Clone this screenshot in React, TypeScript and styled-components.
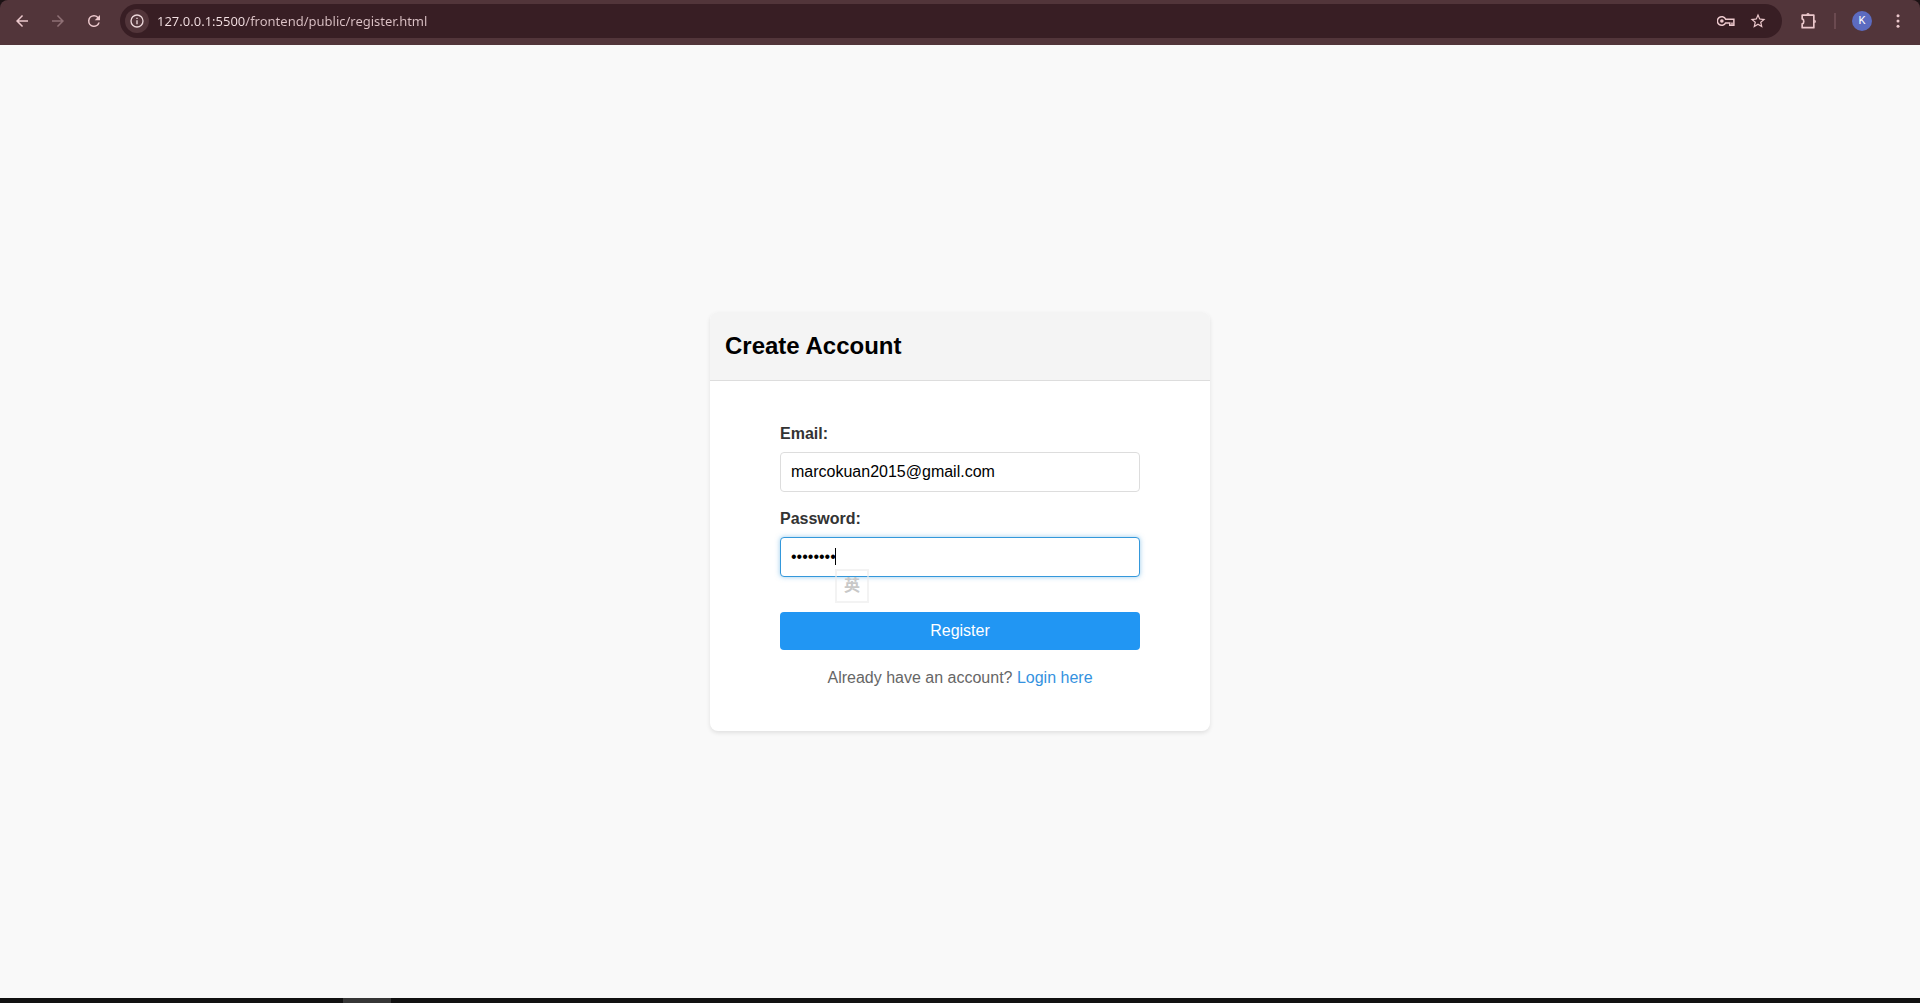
import React, { useState } from "react";
import styled, { createGlobalStyle, css } from "styled-components";

const GlobalStyle = createGlobalStyle`
  *, *::before, *::after { box-sizing: border-box; }
  body {
    margin: 0;
    background: #f9f9f9;
    font-family: "Liberation Sans", Arial, sans-serif;
    font-size: 16px;
  }
`;

const Screen = styled.div`
  min-height: 100vh;
  display: flex;
  flex-direction: column;
`;

const TopEdge = styled.div`
  background: #1c1214;
`;

const Toolbar = styled.header`
  display: flex;
  align-items: center;
  height: 45px;
  padding: 0 4px 4px 4px;
  background: #52353a;
  border-radius: 8px 8px 0 0;
`;

const ToolButton = styled.button<{ $dim?: boolean }>`
  display: flex;
  align-items: center;
  justify-content: center;
  flex: none;
  width: 36px;
  height: 32px;
  padding: 0;
  border: 0;
  border-radius: 16px;
  background: transparent;
  color: ${(p) => (p.$dim ? "#8f7075" : "#ecc8cc")};
`;

const NavButtons = styled.div`
  display: flex;
  width: 116px;
`;

const AddressBar = styled.div`
  display: flex;
  align-items: center;
  flex: 1;
  height: 34px;
  padding: 0 8px 0 5px;
  border-radius: 17px;
  background: #381e24;
`;

const SiteInfo = styled.button`
  display: flex;
  align-items: center;
  justify-content: center;
  flex: none;
  width: 24px;
  height: 24px;
  padding: 0;
  border: 0;
  border-radius: 50%;
  background: #52353a;
  color: #ecd8da;
`;

const AddressInput = styled.input`
  flex: 1;
  min-width: 0;
  height: 24px;
  margin-left: 8px;
  padding: 0;
  border: 0;
  outline: 0;
  color: transparent;
  background: linear-gradient(90deg, #f5e2e4 89px, #dcc2c6 89px);
  background-clip: text;
  -webkit-background-clip: text;
  font: 13px/20px "Noto Sans", "Open Sans", sans-serif;
`;

const AddressActions = styled.div`
  display: flex;
  button { width: 32px; }
`;

const Extras = styled.div`
  display: flex;
  align-items: center;
  padding-left: 8px;
`;

const Separator = styled.span`
  width: 2px;
  height: 16px;
  margin: 0 8px;
  background: #6b4a50;
`;

const Avatar = styled.span`
  display: flex;
  align-items: center;
  justify-content: center;
  width: 20px;
  height: 20px;
  border-radius: 50%;
  background: #5c6bc0;
  color: #fff;
  font: 11px/20px Roboto, sans-serif;
`;

const Page = styled.main`
  flex: 1;
  display: flex;
  align-items: center;
  justify-content: center;
`;

const Card = styled.section`
  width: 100%;
  max-width: 500px;
  border-radius: 8px;
  overflow: hidden;
  background: #fff;
  box-shadow: 0 2px 4px rgba(0, 0, 0, 0.1);
`;

const CardHeader = styled.div`
  padding: 16px 15px;
  border-bottom: 1px solid #ddd;
  background: #f4f4f4;
`;

const Title = styled.h1`
  margin: 0;
  color: #000;
  font-size: 24px;
  line-height: 36px;
`;

const Form = styled.form`
  padding: 42px 70px;
`;

const Field = styled.div`
  display: flex;
  flex-direction: column;
  gap: 8px;
  margin-bottom: 16px;
`;

const Label = styled.label`
  color: #333;
  font-weight: bold;
  line-height: 21px;
`;

const InputWrap = styled.div`
  position: relative;
`;

const TextInput = styled.input<{ $active?: boolean }>`
  display: block;
  width: 100%;
  height: 40px;
  padding: 0 10px;
  border: 1px solid #ddd;
  border-radius: 4px;
  outline: 0;
  background: #fff;
  color: #000;
  font: 16px "Liberation Sans", Arial, sans-serif;
  ${(p) =>
    p.$active &&
    css`
      border-color: #3498db;
      box-shadow: 0 0 5px rgba(52, 152, 219, 0.5);
      caret-color: transparent;
    `}
`;

const Caret = styled.span`
  position: absolute;
  left: 55px;
  top: 11px;
  width: 1px;
  height: 17px;
  background: #000;
`;

const ImeBadge = styled.span`
  position: absolute;
  left: 55px;
  top: 32px;
  width: 34px;
  height: 34px;
  border: 2px solid rgba(235, 235, 235, 0.6);
  color: #c8c8c8;
  font: bold 16px/27px "Noto Sans CJK TC", sans-serif;
  text-align: center;
`;

const RegisterButton = styled.button`
  width: 100%;
  height: 38px;
  margin: 19px 0 16px;
  padding: 0;
  border: 0;
  border-radius: 4px;
  background: #2196f3;
  color: #fff;
  font: 16px "Liberation Sans", Arial, sans-serif;
`;

const Hint = styled.p`
  margin: 0;
  color: #666;
  line-height: 23px;
  text-align: center;
`;

const Link = styled.a`
  color: #3492e0;
  text-decoration: none;
`;

const Taskbar = styled.footer`
  display: flex;
  height: 5px;
  padding-left: 343px;
  background: #111;
`;

const TaskbarItem = styled.span`
  width: 48px;
  background: #363636;
`;

type IconProps = { children: React.ReactNode; size?: number };

const Icon = ({ children, size = 18 }: IconProps) => (
  <svg width={size} height={size} viewBox="0 0 24 24" fill="currentColor" aria-hidden="true">
    {children}
  </svg>
);

export default function App() {
  const [url, setUrl] = useState("127.0.0.1:5500/frontend/public/register.html");
  const [email, setEmail] = useState("marcokuan2015@gmail.com");
  const [password, setPassword] = useState("password");

  return (
    <>
      <GlobalStyle />
      <Screen>
        <TopEdge>
          <Toolbar>
            <NavButtons>
              <ToolButton aria-label="Back">
                <Icon><path d="M20 11H7.83l5.59-5.59L12 4l-8 8 8 8 1.41-1.41L7.83 13H20z" /></Icon>
              </ToolButton>
              <ToolButton aria-label="Forward" $dim>
                <Icon><path d="M12 4l-1.41 1.41L16.17 11H4v2h12.17l-5.58 5.59L12 20l8-8z" /></Icon>
              </ToolButton>
              <ToolButton aria-label="Reload">
                <Icon><path d="M17.65 6.35A7.96 7.96 0 0 0 12 4a8 8 0 1 0 7.73 10h-2.08A6 6 0 1 1 12 6c1.66 0 3.14.69 4.22 1.78L13 11h7V4z" /></Icon>
              </ToolButton>
            </NavButtons>
            <AddressBar>
              <SiteInfo aria-label="Site information">
                <Icon size={16}><path d="M11 7h2v2h-2zm0 4h2v6h-2zm1-9a10 10 0 1 0 0 20 10 10 0 0 0 0-20zm0 18a8 8 0 1 1 0-16 8 8 0 0 1 0 16z" /></Icon>
              </SiteInfo>
              <AddressInput aria-label="Address" value={url} spellCheck={false} onChange={(e) => setUrl(e.target.value)} />
              <AddressActions>
                <ToolButton aria-label="Saved passwords">
                  <Icon>
                    <g fill="none" stroke="currentColor" strokeWidth="2">
                      <path d="M11.500 9.500A5.800 5.800 0 1 0 11.500 14.500H17V17.500H22.500V9.500z" />
                      <path d="M20 14v3" />
                    </g>
                    <circle cx="6.500" cy="12" r="2.400" />
                  </Icon>
                </ToolButton>
                <ToolButton aria-label="Bookmark this page">
                  <Icon><path d="M22 9.240l-7.190-.620L12 2 9.190 8.630 2 9.240l5.460 4.730L5.820 21 12 17.270 18.180 21l-1.630-7.030L22 9.240zM12 15.400l-3.760 2.270 1-4.280-3.320-2.880 4.380-.380L12 6.100l1.710 4.040 4.380.380-3.320 2.880 1 4.280L12 15.400z" /></Icon>
                </ToolButton>
              </AddressActions>
            </AddressBar>
            <Extras>
              <ToolButton aria-label="Extensions">
                <Icon size={20}>
                  <path fill="none" stroke="currentColor" strokeWidth="2" strokeLinejoin="round" d="M5 5h14v15H5v-4.500c2.600-.600 2.600-5.400 0-6z" />
                  <path d="M10 4.500a2 2 0 0 1 4 0zM19.500 10.500a2 2 0 0 1 0 4z" />
                </Icon>
              </ToolButton>
              <Separator />
              <ToolButton aria-label="Profile"><Avatar>K</Avatar></ToolButton>
              <ToolButton aria-label="Menu">
                <Icon><circle cx="12" cy="5" r="2" /><circle cx="12" cy="12" r="2" /><circle cx="12" cy="19" r="2" /></Icon>
              </ToolButton>
            </Extras>
          </Toolbar>
        </TopEdge>
        <Page>
          <Card>
            <CardHeader><Title>Create Account</Title></CardHeader>
            <Form onSubmit={(e) => e.preventDefault()}>
              <Field>
                <Label htmlFor="email">Email:</Label>
                <TextInput id="email" type="email" value={email} onChange={(e) => setEmail(e.target.value)} />
              </Field>
              <Field>
                <Label htmlFor="password">Password:</Label>
                <InputWrap>
                  <TextInput id="password" type="password" $active value={password} onChange={(e) => setPassword(e.target.value)} />
                  <Caret />
                  <ImeBadge>英</ImeBadge>
                </InputWrap>
              </Field>
              <RegisterButton type="submit">Register</RegisterButton>
              <Hint>Already have an account? <Link href="#login">Login here</Link></Hint>
            </Form>
          </Card>
        </Page>
        <Taskbar><TaskbarItem /></Taskbar>
      </Screen>
    </>
  );
}
